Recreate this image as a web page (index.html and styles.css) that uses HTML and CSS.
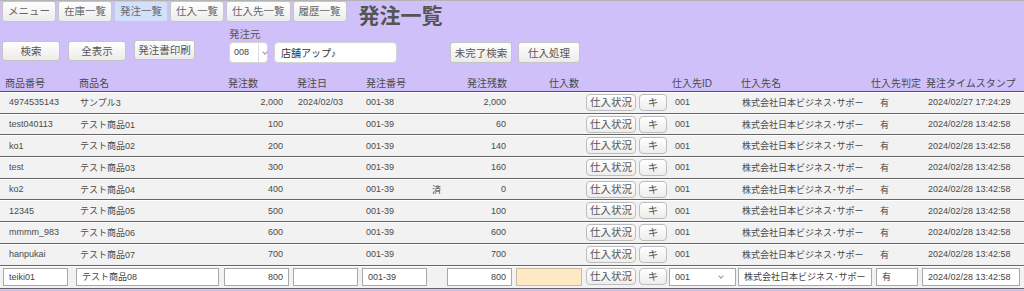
FILE: index.html
```html
<!DOCTYPE html>
<html lang="ja">
<head>
  <meta charset="UTF-8">
  <title>発注一覧</title>
  <link rel="stylesheet" href="styles.css">
</head>
<body>

<div class="topbar">
  <button class="nav">メニュー</button>
  <button class="nav">在庫一覧</button>
  <button class="nav active">発注一覧</button>
  <button class="nav">仕入一覧</button>
  <button class="nav">仕入先一覧</button>
  <button class="nav">履歴一覧</button>
  <h1>発注一覧</h1>
</div>

<div class="toolbar">
  <button class="tool">検索</button>
  <button class="tool">全表示</button>
  <button class="tool print">発注書印刷</button>
  <div class="source">
    <div class="source-label">発注元</div>
    <div class="source-fields">
      <div class="code-select"><span>008</span><span class="arrow"></span></div>
      <input class="shop" type="text" value="店舗アップ♪">
    </div>
  </div>
  <button class="tool wide first-right">未完了検索</button>
  <button class="tool wide">仕入処理</button>
</div>

<div class="list">
  <div class="head">
    <div class="h1c">商品番号</div>
    <div class="h2c">商品名</div>
    <div class="h3c">発注数</div>
    <div class="h4c">発注日</div>
    <div class="h5c">発注番号</div>
    <div class="h6c">発注残数</div>
    <div class="h7c">仕入数</div>
    <div></div>
    <div class="h9c">仕入先ID</div>
    <div class="h10c">仕入先名</div>
    <div class="h11c">仕入先判定</div>
    <div class="h12c">発注タイムスタンプ</div>
  </div>

  <div class="row">
    <div class="c-code">4974535143</div>
    <div class="c-name">サンプル3</div>
    <div class="c-qty">2,000</div>
    <div class="c-date">2024/02/03</div>
    <div class="c-no">001-38</div>
    <div class="c-done"></div>
    <div class="c-rest">2,000</div>
    <div></div>
    <div><button class="rbtn status">仕入状況</button></div>
    <div><button class="rbtn key">キ</button></div>
    <div class="c-sid">001</div>
    <div class="c-sname">株式会社日本ビジネス･サポー</div>
    <div class="c-judge">有</div>
    <div class="c-stamp">2024/02/27 17:24:29</div>
  </div>

  <div class="row">
    <div class="c-code">test040113</div>
    <div class="c-name">テスト商品01</div>
    <div class="c-qty">100</div>
    <div class="c-date"></div>
    <div class="c-no">001-39</div>
    <div class="c-done"></div>
    <div class="c-rest">60</div>
    <div></div>
    <div><button class="rbtn status">仕入状況</button></div>
    <div><button class="rbtn key">キ</button></div>
    <div class="c-sid">001</div>
    <div class="c-sname">株式会社日本ビジネス･サポー</div>
    <div class="c-judge">有</div>
    <div class="c-stamp">2024/02/28 13:42:58</div>
  </div>

  <div class="row">
    <div class="c-code">ko1</div>
    <div class="c-name">テスト商品02</div>
    <div class="c-qty">200</div>
    <div class="c-date"></div>
    <div class="c-no">001-39</div>
    <div class="c-done"></div>
    <div class="c-rest">140</div>
    <div></div>
    <div><button class="rbtn status">仕入状況</button></div>
    <div><button class="rbtn key">キ</button></div>
    <div class="c-sid">001</div>
    <div class="c-sname">株式会社日本ビジネス･サポー</div>
    <div class="c-judge">有</div>
    <div class="c-stamp">2024/02/28 13:42:58</div>
  </div>

  <div class="row">
    <div class="c-code">test</div>
    <div class="c-name">テスト商品03</div>
    <div class="c-qty">300</div>
    <div class="c-date"></div>
    <div class="c-no">001-39</div>
    <div class="c-done"></div>
    <div class="c-rest">160</div>
    <div></div>
    <div><button class="rbtn status">仕入状況</button></div>
    <div><button class="rbtn key">キ</button></div>
    <div class="c-sid">001</div>
    <div class="c-sname">株式会社日本ビジネス･サポー</div>
    <div class="c-judge">有</div>
    <div class="c-stamp">2024/02/28 13:42:58</div>
  </div>

  <div class="row">
    <div class="c-code">ko2</div>
    <div class="c-name">テスト商品04</div>
    <div class="c-qty">400</div>
    <div class="c-date"></div>
    <div class="c-no">001-39</div>
    <div class="c-done">済</div>
    <div class="c-rest">0</div>
    <div></div>
    <div><button class="rbtn status">仕入状況</button></div>
    <div><button class="rbtn key">キ</button></div>
    <div class="c-sid">001</div>
    <div class="c-sname">株式会社日本ビジネス･サポー</div>
    <div class="c-judge">有</div>
    <div class="c-stamp">2024/02/28 13:42:58</div>
  </div>

  <div class="row">
    <div class="c-code">12345</div>
    <div class="c-name">テスト商品05</div>
    <div class="c-qty">500</div>
    <div class="c-date"></div>
    <div class="c-no">001-39</div>
    <div class="c-done"></div>
    <div class="c-rest">100</div>
    <div></div>
    <div><button class="rbtn status">仕入状況</button></div>
    <div><button class="rbtn key">キ</button></div>
    <div class="c-sid">001</div>
    <div class="c-sname">株式会社日本ビジネス･サポー</div>
    <div class="c-judge">有</div>
    <div class="c-stamp">2024/02/28 13:42:58</div>
  </div>

  <div class="row">
    <div class="c-code">mmmm_983</div>
    <div class="c-name">テスト商品06</div>
    <div class="c-qty">600</div>
    <div class="c-date"></div>
    <div class="c-no">001-39</div>
    <div class="c-done"></div>
    <div class="c-rest">600</div>
    <div></div>
    <div><button class="rbtn status">仕入状況</button></div>
    <div><button class="rbtn key">キ</button></div>
    <div class="c-sid">001</div>
    <div class="c-sname">株式会社日本ビジネス･サポー</div>
    <div class="c-judge">有</div>
    <div class="c-stamp">2024/02/28 13:42:58</div>
  </div>

  <div class="row">
    <div class="c-code">hanpukai</div>
    <div class="c-name">テスト商品07</div>
    <div class="c-qty">700</div>
    <div class="c-date"></div>
    <div class="c-no">001-39</div>
    <div class="c-done"></div>
    <div class="c-rest">700</div>
    <div></div>
    <div><button class="rbtn status">仕入状況</button></div>
    <div><button class="rbtn key">キ</button></div>
    <div class="c-sid">001</div>
    <div class="c-sname">株式会社日本ビジネス･サポー</div>
    <div class="c-judge">有</div>
    <div class="c-stamp">2024/02/28 13:42:58</div>
  </div>

  <!-- 編集中の行 -->
  <div class="row edit">
    <div><input class="f f-code" type="text" value="teiki01"></div>
    <div><input class="f f-name" type="text" value="テスト商品08"></div>
    <div><input class="f f-qty num" type="text" value="800"></div>
    <div><input class="f f-date" type="text" value=""></div>
    <div><input class="f f-no" type="text" value="001-39"></div>
    <div></div>
    <div><input class="f f-rest num" type="text" value="800"></div>
    <div><input class="f f-in" type="text" value=""></div>
    <div><button class="rbtn status">仕入状況</button></div>
    <div><button class="rbtn key">キ</button></div>
    <div><div class="f f-sid"><span>001</span><span class="arrow"></span></div></div>
    <div><input class="f f-sname" type="text" value="株式会社日本ビジネス･サポー"></div>
    <div><input class="f f-judge" type="text" value="有"></div>
    <div><input class="f f-stamp" type="text" value="2024/02/28 13:42:58"></div>
  </div>
</div>

</body>
</html>
```

FILE: styles.css
```css
body{
  margin: 0;
  border-top: 1px solid #b4b4b4;
  background: #d0c0f9;
  font-family: "Liberation Sans", "Noto Sans CJK JP", sans-serif;
  color: #444;
  overflow: hidden;
}

button, input{
  font-family: "Liberation Sans", "Noto Sans CJK JP", sans-serif;
  box-sizing: border-box;
}

/* 上部メニュー */
.topbar{
  display: flex;
  align-items: flex-start;
  gap: 2px;
  padding-left: 2px;
  height: 26px;
}

.nav{
  height: 21px;
  padding: 0 5px;
  font-size: 10.5px;
  line-height: 19px;
  color: #666;
  background: linear-gradient(#ffffff, #ececec);
  border: 1px solid #c6c6c6;
  border-radius: 3px;
}

.nav.active{
  background: #d2e0fa;
  border-color: #c2cde6;
}

.topbar h1{
  margin: 0 0 0 10px;
  font-size: 21px;
  line-height: 26px;
  font-weight: bold;
  color: #545454;
  font-family: "Noto Sans CJK JP", sans-serif;
}

/* 検索エリア */
.toolbar{
  display: flex;
  align-items: flex-end;
  height: 36px;
  padding-left: 2px;
}

.tool{
  width: 58px;
  height: 20px;
  margin: 0 8px 2px 0;
  padding: 0;
  font-size: 10.5px;
  line-height: 18px;
  color: #555;
  background: linear-gradient(#ffffff, #ebebeb);
  border: 1px solid #c4c4c4;
  border-radius: 3px;
}

.tool.print{
  width: 61px;
  margin-bottom: 3px;
}

.tool.wide{
  width: 62px;
  height: 21px;
  margin: 0 6px 0 0;
}

.tool.first-right{
  margin-left: 53px;
}

.source{
  margin-left: 26px;
}

.source-label{
  font-size: 10.5px;
  line-height: 13px;
  margin-bottom: 1px;
  color: #555;
}

.source-fields{
  display: flex;
  gap: 6px;
}

.code-select{
  display: flex;
  align-items: center;
  width: 39px;
  height: 21px;
  box-sizing: border-box;
  background: #fff;
  border: 1px solid #d4d4d4;
  border-radius: 4px;
  font-size: 9px;
  color: #444;
}

.code-select span:first-child{
  width: 24px;
  padding-left: 4px;
  border-right: 1px solid #ddd;
  line-height: 19px;
}

.arrow{
  width: 3px;
  height: 3px;
  margin-left: 4px;
  margin-top: -2px;
  border-right: 1px solid #999;
  border-bottom: 1px solid #999;
  transform: rotate(45deg);
}

.shop{
  width: 123px;
  height: 21px;
  padding: 0 6px;
  font-size: 10px;
  color: #333;
  background: #fff;
  border: 1px solid #d4d4d4;
  border-radius: 4px;
}

/* 一覧 */
.list{
  margin-top: 13px;
}

.head{
  display: grid;
  grid-template-columns: 74px 148px 68px 70px 70px 84px 70px 83px 69px 134px 55px 1fr;
  height: 15px;
  font-size: 10px;
  line-height: 15px;
  color: #4a4a4a;
  border-bottom: 1px solid #555;
  white-space: nowrap;
}

.h1c{ padding-left: 5px; }
.h2c{ padding-left: 5px; }
.h3c{ padding-left: 6px; }
.h4c{ padding-left: 7px; }
.h5c{ padding-left: 6px; }
.h6c{ text-align: right; padding-right: 7px; }
.h7c{ padding-left: 35px; }
.h9c{ padding-left: 5px; }
.h10c{ padding-left: 5px; }
.h11c{ padding-left: 1px; }
.h12c{ padding-left: 1px; }

.row{
  display: grid;
  grid-template-columns: 74px 148px 68px 70px 70px 15px 69px 70px 54px 30px 69px 138px 46px 1fr;
  align-items: center;
  height: 20.7px;
  background: #f2f2f2;
  border-bottom: 1px solid #666;
  box-shadow: inset 0 1px 0 #fff;
  font-size: 9px;
  color: #4a4a4a;
  white-space: nowrap;
}

.row > div{
  overflow: hidden;
}

.c-code{ padding-left: 9px; }
.c-name{ padding-left: 6px; }
.c-qty{ text-align: right; padding-right: 7px; }
.c-date{ padding-left: 8px; }
.c-no{ padding-left: 6px; }
.c-done{ padding-left: 2px; }
.c-rest{ text-align: right; padding-right: 8px; }
.c-sid{ padding-left: 7px; }
.c-sname{ padding-left: 5px; }
.c-judge{ padding-left: 5px; }
.c-stamp{ padding-left: 7px; }

.rbtn{
  display: block;
  height: 17px;
  padding: 0;
  font-size: 10.5px;
  line-height: 15px;
  color: #555;
  background: linear-gradient(#ffffff, #ededed);
  border: 1px solid #bdbdbd;
  border-radius: 4px;
}

.rbtn.status{
  width: 50px;
  margin-left: 2px;
}

.rbtn.key{
  width: 28px;
  margin-left: 1px;
}

/* 入力行 */
.row.edit{
  height: 22px;
}

.f{
  display: block;
  height: 18px;
  padding: 0 5px;
  font-size: 9px;
  color: #444;
  background: #fff;
  border: 1px solid #a8a8a8;
  border-radius: 0;
  box-sizing: border-box;
}

.f.num{ text-align: right; }

.f-code{ width: 65px; margin-left: 3px; }
.f-name{ width: 143px; margin-left: 2px; }
.f-qty{ width: 65px; margin-left: 2px; }
.f-date{ width: 65px; margin-left: 3px; }
.f-no{ width: 65px; margin-left: 2px; }
.f-rest{ width: 65px; margin-left: 2px; }
.f-in{ width: 66px; margin-left: 2px; background: #ffe9c4; border-color: #c9bca0; }
.f-sname{ width: 134px; margin-left: 1px; }
.f-judge{ width: 42px; margin-left: 1px; }
.f-stamp{ width: 98px; margin-left: 1px; }

.f-sid{
  display: flex;
  align-items: center;
  justify-content: space-between;
  width: 67px;
  margin-left: 1px;
  line-height: 16px;
}

.f-sid .arrow{
  margin-right: 7px;
}
```
